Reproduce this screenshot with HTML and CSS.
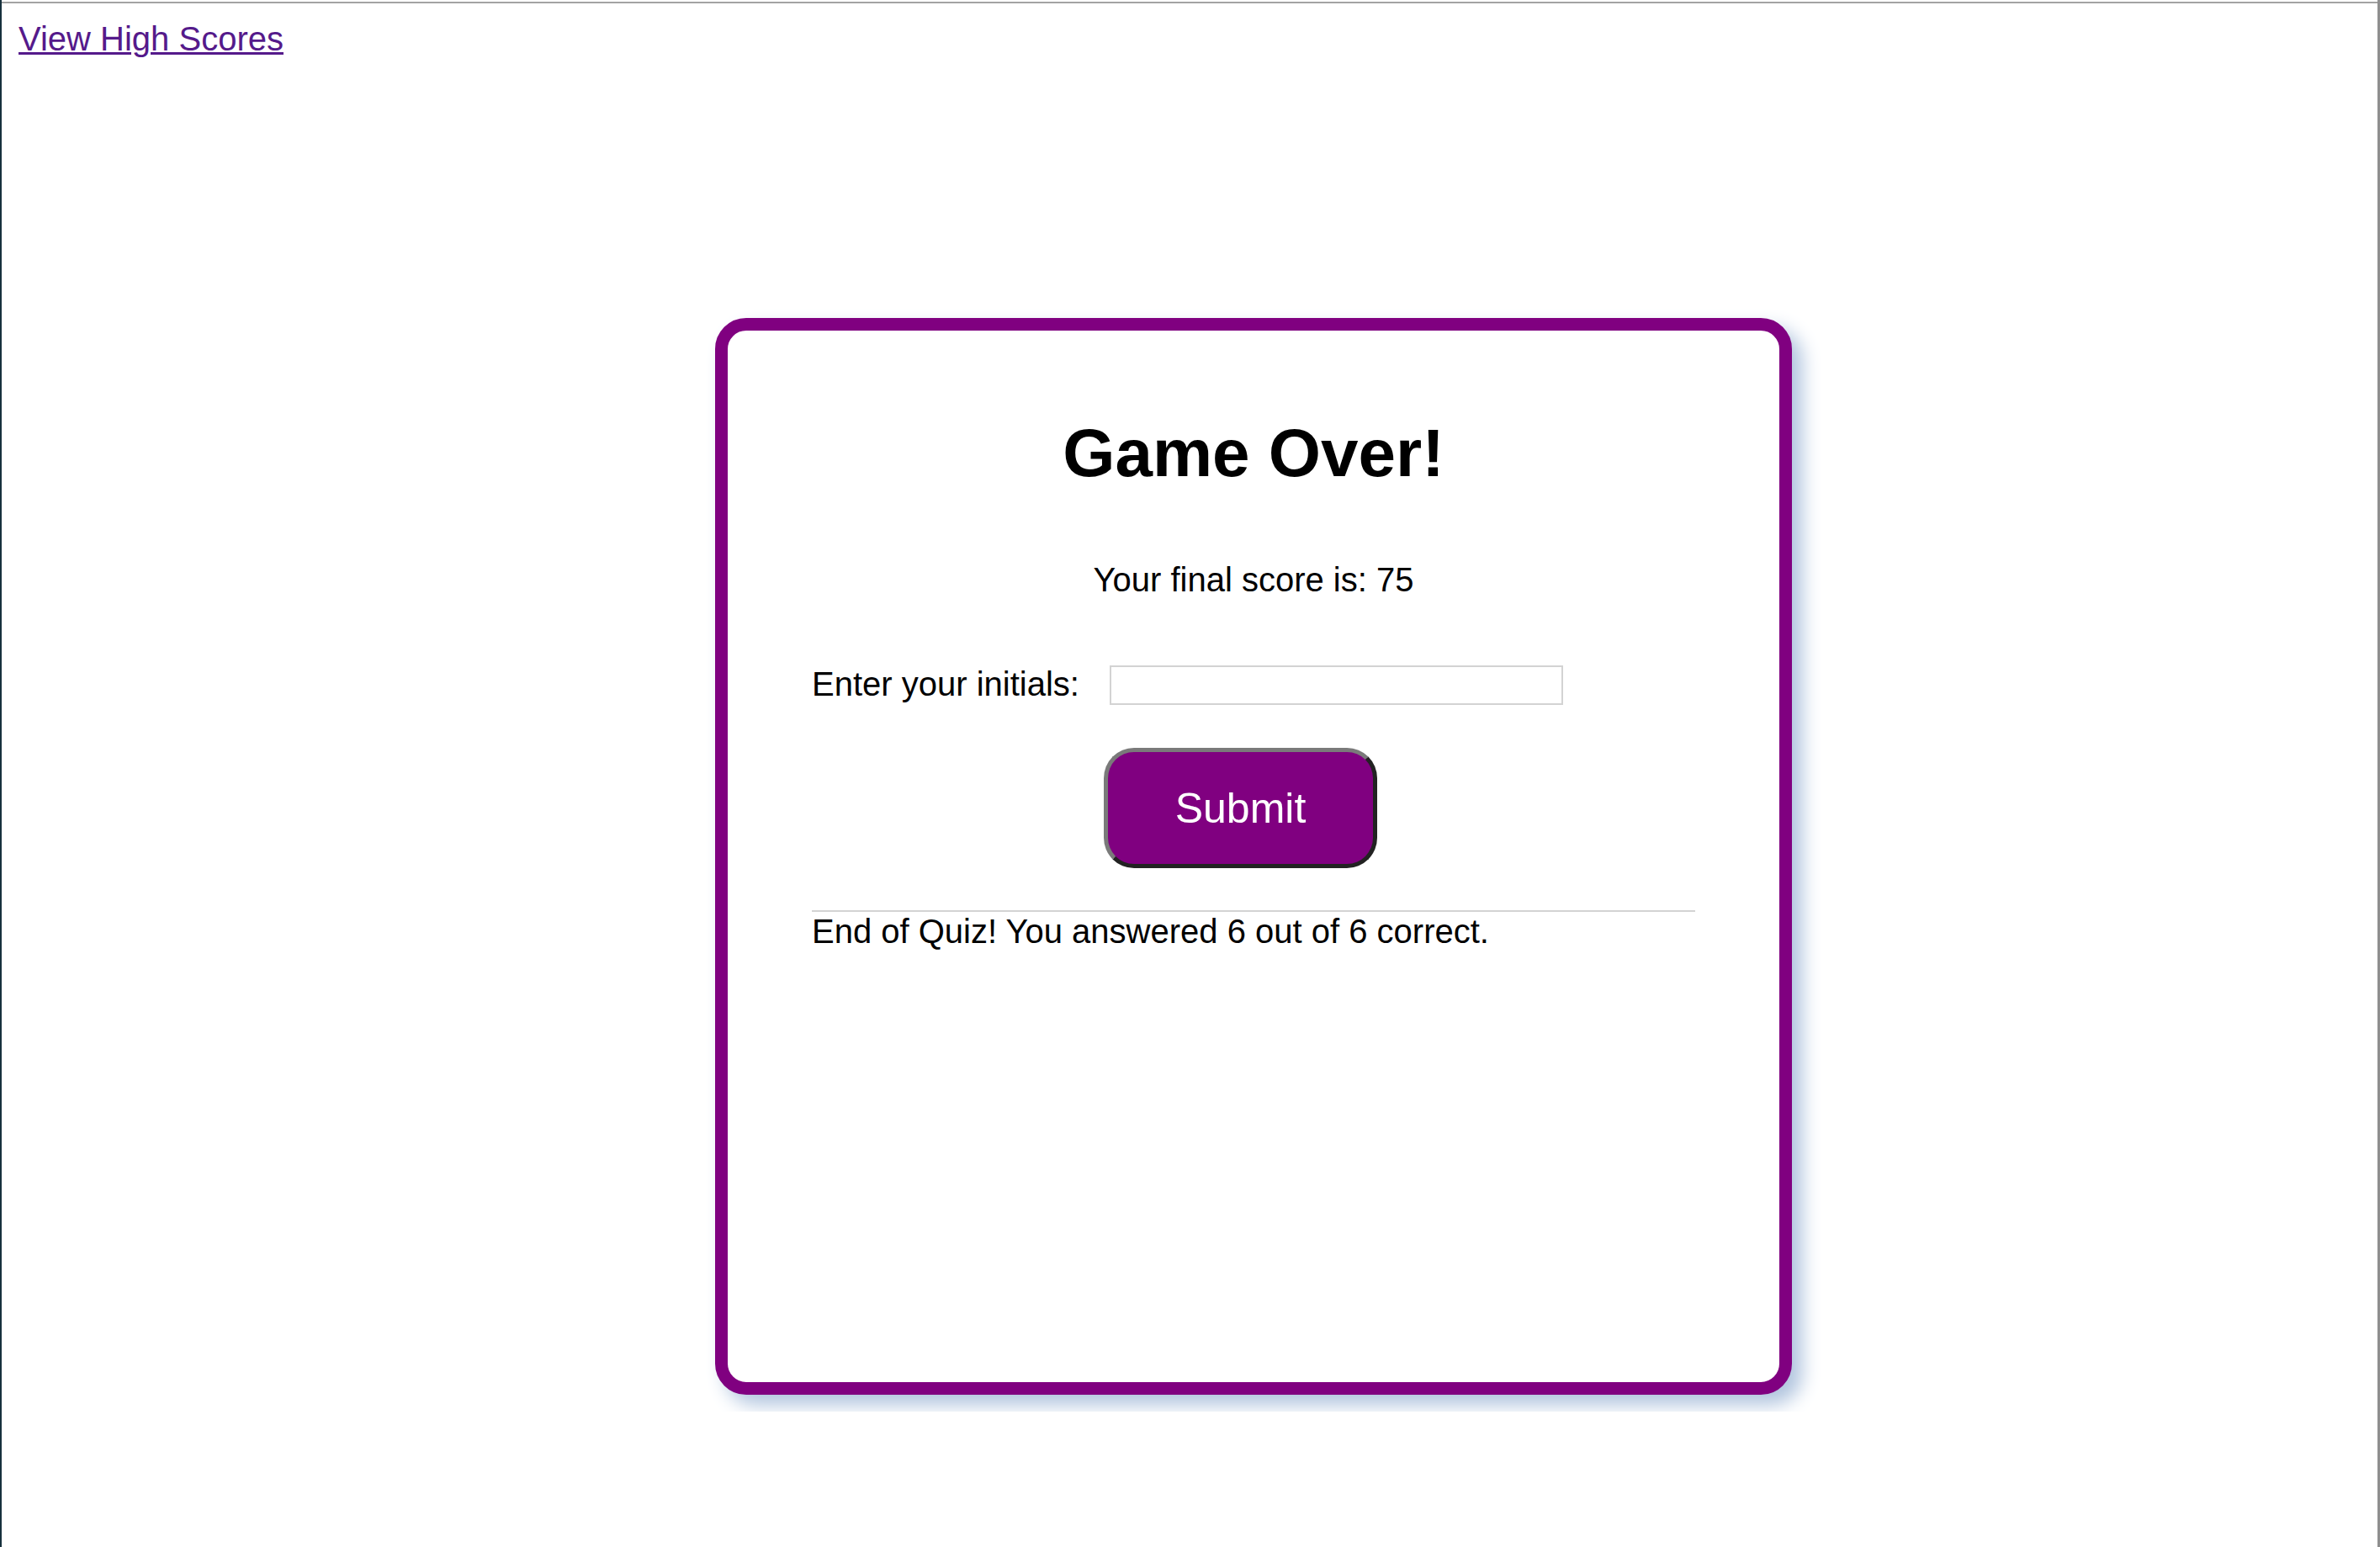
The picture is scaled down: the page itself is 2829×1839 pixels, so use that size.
FILE: index.html
```html
<!DOCTYPE html>
<html lang="en">
<head>
<meta charset="utf-8">
<title>Quiz - Game Over</title>
<link rel="stylesheet" href="styles.css">
</head>
<body>
  <header class="top-bar">
    <a class="scores-link" href="#highscores">View High Scores</a>
  </header>
  <main class="card">
    <h1 class="title">Game Over!</h1>
    <p class="final-score">Your final score is: 75</p>
    <form class="initials-form" onsubmit="return false;">
      <div class="initials-row">
        <label class="initials-label" for="initials">Enter your initials:</label>
        <input class="initials-input" id="initials" type="text">
      </div>
      <div class="submit-row">
        <button class="submit-btn" type="submit">Submit</button>
      </div>
    </form>
    <hr class="divider">
    <p class="result">End of Quiz! You answered 6 out of 6 correct.</p>
  </main>
</body>
</html>
```

FILE: styles.css
```css
html {
  border-left: 2px solid #17313d;
  border-right: 3px solid #8e8e8e;
  background: #ffffff linear-gradient(#a3a3a3, #a3a3a3) 0 2px / 100% 2px no-repeat;
  min-height: 100%;
}

body {
  margin: 0;
  padding: 24px 20px 20px 20px;
  font-family: "Liberation Sans", Arial, sans-serif;
  font-size: 40px;
  color: #000000;
}

.top-bar {
  display: flex;
}

.scores-link {
  color: #551a8b;
  text-decoration: underline;
  text-decoration-thickness: 3px;
}

.card {
  box-sizing: border-box;
  width: 1280px;
  height: 1280px;
  margin: 309px 0 0 828px;
  padding: 100px 100px 0 100px;
  border: 15px solid #800080;
  border-radius: 37px;
  background: #ffffff;
  box-shadow: 12px 12px 22px #b0c4de;
}

.title {
  margin: 0;
  font-size: 80px;
  font-weight: bold;
  text-align: center;
  line-height: 92px;
}

.final-score {
  margin: 81px 0 0 0;
  text-align: center;
  line-height: 46px;
}

.initials-form {
  margin: 79px 0 0 0;
}

.initials-row {
  display: flex;
  align-items: center;
  gap: 36px;
}

.initials-label {
  line-height: 46px;
  margin-top: -3px;
}

.initials-input {
  box-sizing: border-box;
  width: 539px;
  height: 47px;
  margin: 0;
  padding: 2px 6px;
  border: 2px solid #d3d3d3;
  background: #ffffff;
  font-family: "Liberation Sans", Arial, sans-serif;
  font-size: 33px;
  outline: none;
}

.submit-row {
  display: flex;
  justify-content: center;
  margin-top: 51px;
  padding-right: 31px;
}

.submit-btn {
  box-sizing: border-box;
  width: 325px;
  height: 143px;
  margin: 0;
  padding: 0;
  border-width: 5px;
  border-style: solid;
  border-color: #7a7a7a #222222 #222222 #7a7a7a;
  border-radius: 36px;
  background: #800080;
  color: #ffffff;
  font-family: "Liberation Sans", Arial, sans-serif;
  font-size: 50px;
  cursor: pointer;
}

.divider {
  margin: 50px 0 0 0;
  height: 0;
  border: 0;
  border-top: 2px solid #d3d3d3;
}

.result {
  margin: 0;
  line-height: 46px;
}
```
